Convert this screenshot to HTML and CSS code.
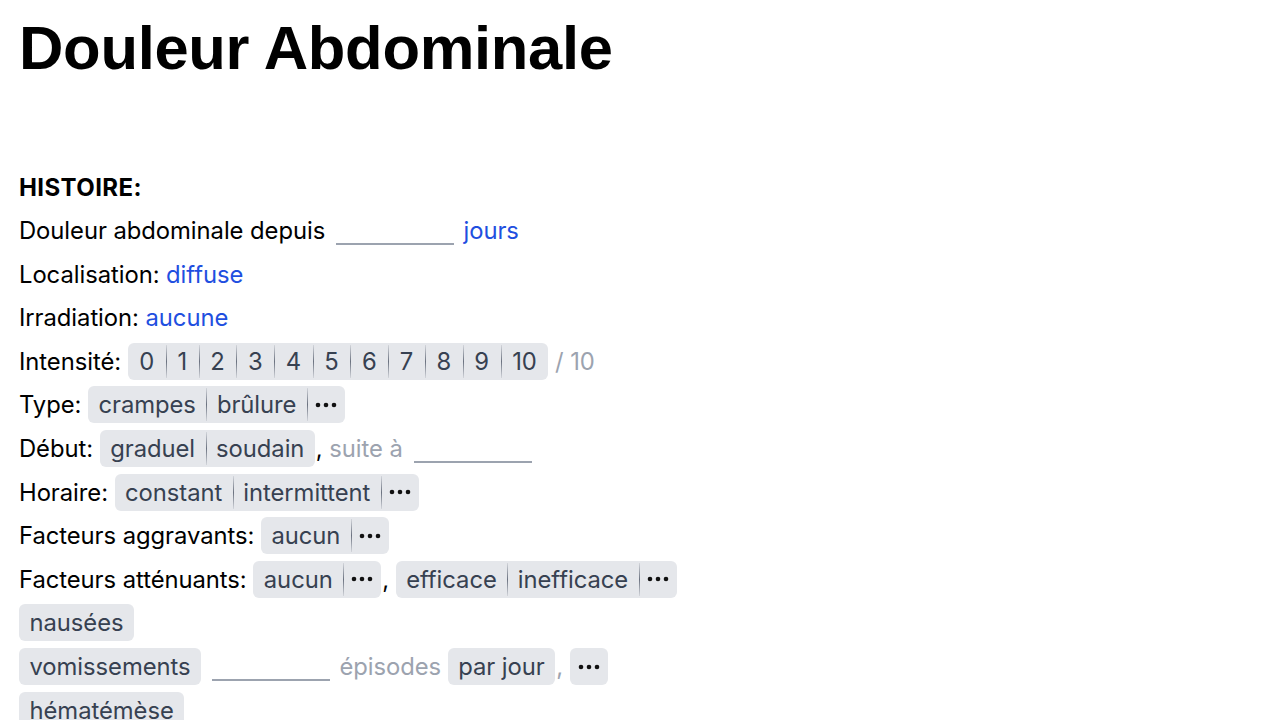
FILE: index.html
```html
<!DOCTYPE html>
<html lang="fr">
<head>
<meta charset="utf-8">
<title>Douleur Abdominale</title>
<link rel="stylesheet" href="styles.css">
</head>
<body>
<main class="page">
  <h1 class="title">Douleur Abdominale</h1>
  <section class="section">
    <h2 class="section-title">HISTOIRE:</h2>
    <div class="row">Douleur abdominale depuis <span class="blank"></span> <a class="link">jours</a></div>
    <div class="row">Localisation: <a class="link">diffuse</a></div>
    <div class="row">Irradiation: <a class="link">aucune</a></div>
    <div class="row">Intensité: <span class="chip"><span class="seg num">0</span><span class="seg num">1</span><span class="seg num">2</span><span class="seg num">3</span><span class="seg num">4</span><span class="seg num">5</span><span class="seg num">6</span><span class="seg num">7</span><span class="seg num">8</span><span class="seg num">9</span><span class="seg num">10</span></span> <span class="muted">/ 10</span></div>
    <div class="row">Type: <span class="chip"><span class="seg">crampes</span><span class="seg">brûlure</span><span class="seg more"><svg width="22" height="6" viewBox="0 0 22 6"><circle cx="3" cy="3" r="2.3"/><circle cx="11" cy="3" r="2.3"/><circle cx="19" cy="3" r="2.3"/></svg></span></span></div>
    <div class="row">Début: <span class="chip"><span class="seg">graduel</span><span class="seg">soudain</span></span><span class="comma">,</span> <span class="muted">suite à</span> <span class="blank"></span></div>
    <div class="row">Horaire: <span class="chip"><span class="seg">constant</span><span class="seg">intermittent</span><span class="seg more"><svg width="22" height="6" viewBox="0 0 22 6"><circle cx="3" cy="3" r="2.3"/><circle cx="11" cy="3" r="2.3"/><circle cx="19" cy="3" r="2.3"/></svg></span></span></div>
    <div class="row">Facteurs aggravants: <span class="chip"><span class="seg">aucun</span><span class="seg more"><svg width="22" height="6" viewBox="0 0 22 6"><circle cx="3" cy="3" r="2.3"/><circle cx="11" cy="3" r="2.3"/><circle cx="19" cy="3" r="2.3"/></svg></span></span></div>
    <div class="row">Facteurs atténuants: <span class="chip"><span class="seg">aucun</span><span class="seg more"><svg width="22" height="6" viewBox="0 0 22 6"><circle cx="3" cy="3" r="2.3"/><circle cx="11" cy="3" r="2.3"/><circle cx="19" cy="3" r="2.3"/></svg></span></span><span class="comma">,</span> <span class="chip"><span class="seg">efficace</span><span class="seg">inefficace</span><span class="seg more"><svg width="22" height="6" viewBox="0 0 22 6"><circle cx="3" cy="3" r="2.3"/><circle cx="11" cy="3" r="2.3"/><circle cx="19" cy="3" r="2.3"/></svg></span></span></div>
    <div class="row"><span class="chip"><span class="seg">nausées</span></span></div>
    <div class="row"><span class="chip"><span class="seg">vomissements</span></span> <span class="blank"></span> <span class="muted">épisodes</span> <span class="chip"><span class="seg">par jour</span></span><span class="comma muted">,</span> <span class="chip"><span class="seg more"><svg width="22" height="6" viewBox="0 0 22 6"><circle cx="3" cy="3" r="2.3"/><circle cx="11" cy="3" r="2.3"/><circle cx="19" cy="3" r="2.3"/></svg></span></span></div>
    <div class="row"><span class="chip"><span class="seg">hématémèse</span></span></div>
  </section>
</main>
</body>
</html>
```
FILE: styles.css
```css
html, body {
  margin: 0;
  padding: 0;
  background: #ffffff;
}
body {
  font-family: Inter, "Liberation Sans", Arial, sans-serif;
  color: #000;
  font-size: 23.8px;
  letter-spacing: -0.05px;
}
.page {
  padding: 0 19px;
}
.title {
  font-family: "Liberation Sans", Arial, sans-serif;
  font-weight: 700;
  font-size: 61.5px;
  line-height: 1;
  margin: 0;
  padding-top: 17px;
  letter-spacing: -0.3px;
}
.section {
  margin-top: 87px;
}
.section-title {
  font-size: 24px;
  font-weight: 700;
  letter-spacing: 0.4px;
  margin: 0;
  line-height: 43.6px;
}
.row {
  line-height: 43.6px;
  height: 43.6px;
  white-space: nowrap;
}
.link {
  color: #1f4fe0;
}
.muted {
  color: #9ca3af;
}
.comma {
  margin-left: 1px;
}
.blank {
  display: inline-block;
  width: 118px;
  height: 2px;
  background: #9ca3af;
  vertical-align: -6px;
  margin: 0 3px 0 4px;
}
.chip {
  display: inline-flex;
  align-items: center;
  height: 37px;
  background: #e5e7eb;
  border-radius: 6px;
  color: #374151;
  vertical-align: middle;
  line-height: 37px;
  position: relative;
  top: -2px;
}
.seg {
  display: inline-flex;
  align-items: center;
  justify-content: center;
  height: 100%;
  padding: 0 10.5px;
  position: relative;
}
.seg.num {
  padding: 0 11.6px;
}
.seg + .seg::before {
  content: "";
  position: absolute;
  left: 0;
  top: 2px;
  bottom: 2px;
  width: 1px;
  background: linear-gradient(to bottom, rgba(107,114,128,0.15), #6b7280 50%, rgba(107,114,128,0.15));
}
.more {
  padding: 0 8px;
}
.more svg {
  fill: #111111;
  display: block;
}
```
